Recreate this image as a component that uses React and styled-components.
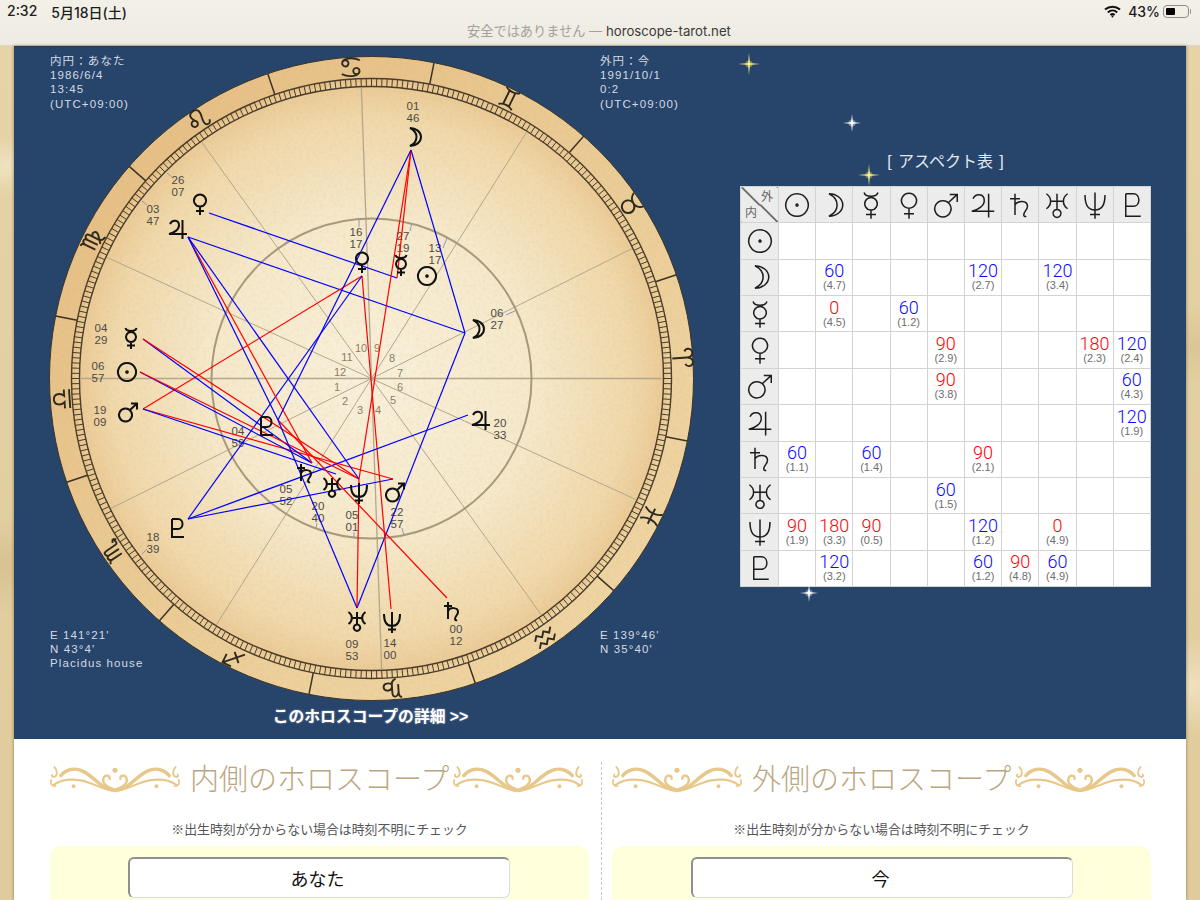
import React from 'react';
import styled, { createGlobalStyle } from 'styled-components';

const SANS = '"Liberation Sans", "Noto Sans CJK JP", sans-serif';
const UI = 'Inter, "Noto Sans CJK JP", sans-serif';

const GlobalStyle = createGlobalStyle`
  html, body {
    margin: 0;
    height: 900px;
    overflow: hidden;
    font-family: ${SANS};
    background: #e4d2a8;
  }
`;

// planet order is the same for the table columns, rows and the chart
const PLANET_PATHS = {
  sun: 'M12 3a9 9 0 1 0 0.01 0 M12 11.2a0.8 0.8 0 1 0 0.01 0',
  moon: 'M8 3C14 3 19 7 19 12C19 17 14 21 8 21C12 19 14.5 16 14.5 12C14.5 8 12 5 8 3Z',
  mercury: 'M6.5 2C7.5 6 16.5 6 17.5 2 M12 6a5 5 0 1 0 0.01 0 M12 16V23 M8 19.5H16',
  venus: 'M12 2.5a6 6 0 1 0 0.01 0 M12 14.5V23 M8 19H16',
  mars: 'M9.5 8.5a6.5 6.5 0 1 0 0.01 0 M14 10L21 3.5 M15 3.5H21V9.5',
  jupiter: 'M4 7C6 2.5 13 2.5 13 8.5C13 12.5 8 16 3 17H21 M16.5 3V22',
  saturn: 'M8 3V20 M4 7H12 M8 12C10 8 18 8 18 13C18 16 15 17 15 20C15 21 16 21.5 17 21',
  uranus: 'M3.5 3C8 6 8 12 3.5 15 M20.5 3C16 6 16 12 20.5 15 M7 9H17 M12 3V15.5 M12 15.5a3.2 3.2 0 1 0 0.01 0',
  neptune: 'M4 4C4 13 7 16 12 16C17 16 20 13 20 4 M12 2V23 M8 19.5H16',
  pluto: 'M7 3V21H19 M7 3H13C19 3 19 13 13 13H7',
};

const PLANETS = ['sun', 'moon', 'mercury', 'venus', 'mars', 'jupiter', 'saturn', 'uranus', 'neptune', 'pluto'];

const SIGN_PATHS = [
  'M12 22V8C12 3 8 2 6 3C3 4 3 9 6 10 M12 8C12 3 16 2 18 3C21 4 21 9 18 10',
  'M12 9a6 6 0 1 0 0.01 0 M4 3C6 8 9 9 12 9C15 9 18 8 20 3',
  'M5 3C9 6 15 6 19 3 M5 21C9 18 15 18 19 21 M9 5.5V18.5 M15 5.5V18.5',
  'M7 5a3 3 0 1 0 0.01 0 M4 8C4 3 14 2 21 6 M17 13a3 3 0 1 0 0.01 0 M20 16C20 21 10 22 3 18',
  'M7 11a3 3 0 1 0 0.01 0 M9 12C6 7 7 3 12 3C18 3 18 8 16 13C15 16 14 20 17 21C19 22 21 20 21 18',
  'M3 5C5 4 6 6 6 8V19 M6 8C7 4 11 4 11 8V19 M11 8C12 4 16 4 16 8V17C16 20 18 22 21 22 M16 11C20 8 23 12 20 15C18 17 15 19 13 21',
  'M3 21H21 M3 16H9C6 13 6 6 12 6C18 6 18 13 15 16H21',
  'M3 5C5 4 6 6 6 8V19 M6 8C7 4 11 4 11 8V19 M11 8C12 4 16 4 16 8V18C16 21 18 21 22 19 M22 19L19 17 M22 19L20 22',
  'M4 20L20 4 M11 4H20V13 M6 10L14 18',
  'M3 5C5 4 6 7 6 10V17 M6 10C7 4 12 4 12 9V17C12 21 9 22 8 22 M12 14C14 10 20 11 20 15C20 19 14 19 12 17',
  'M2 10L6 6L10 10L14 6L18 10L22 6 M2 18L6 14L10 18L14 14L18 18L22 14',
  'M6 3C10 8 10 16 6 21 M18 3C14 8 14 16 18 21 M4 12H20',
];

// chart centre, in page pixels
const CX = 371.5;
const CY = 377.5;

const polar = (r, deg) => {
  const a = (deg * Math.PI) / 180;
  return [CX + r * Math.cos(a), CY - r * Math.sin(a)];
};

const OUTER = {
  sun: { glyph: [127, 371], tip: [140, 371], deg: ['06', '57'], at: [98, 365] },
  moon: { glyph: [414, 136], tip: [411, 149], deg: ['01', '46'], at: [413, 105] },
  mercury: { glyph: [131, 337], tip: [143, 338], deg: ['04', '29'], at: [101, 327] },
  venus: { glyph: [200, 203], tip: [209, 212], deg: ['26', '07'], at: [178, 179] },
  mars: { glyph: [128, 411], tip: [143, 408], deg: ['19', '09'], at: [100, 409] },
  jupiter: { glyph: [178, 228], tip: [188, 236], deg: ['03', '47'], at: [153, 208] },
  saturn: { glyph: [452, 610], tip: [447, 597], deg: ['00', '12'], at: [456, 628] },
  uranus: { glyph: [357, 620], tip: [357, 607], deg: ['09', '53'], at: [352, 643] },
  neptune: { glyph: [392, 621], tip: [391, 608], deg: ['14', '00'], at: [390, 642] },
  pluto: { glyph: [177, 527], tip: [188, 518], deg: ['18', '39'], at: [153, 536] },
};

const INNER = {
  sun: { glyph: [427, 275], tip: [427, 275], deg: ['13', '17'], at: [435, 247] },
  moon: { glyph: [477, 328], tip: [465, 332], deg: ['06', '27'], at: [497, 312] },
  mercury: { glyph: [401, 264], tip: [397, 277], deg: ['27', '19'], at: [403, 235] },
  venus: { glyph: [362, 261], tip: [362, 275], deg: ['16', '17'], at: [356, 231] },
  mars: { glyph: [395, 491], tip: [393, 478], deg: ['22', '57'], at: [397, 511] },
  jupiter: { glyph: [481, 419], tip: [468, 414], deg: ['20', '33'], at: [500, 422] },
  saturn: { glyph: [305, 472], tip: [312, 462], deg: ['05', '52'], at: [286, 488] },
  uranus: { glyph: [332, 486], tip: [336, 473], deg: ['20', '40'], at: [318, 505] },
  neptune: { glyph: [359, 492], tip: [359, 478], deg: ['05', '01'], at: [352, 514] },
  pluto: { glyph: [266, 425], tip: [278, 419], deg: ['04', '59'], at: [238, 430] },
};

// [inner planet, outer planet, aspect, orb]
const ASPECTS = [
  ['moon', 'moon', 60, '4.7'],
  ['moon', 'jupiter', 120, '2.7'],
  ['moon', 'uranus', 120, '3.4'],
  ['mercury', 'moon', 0, '4.5'],
  ['mercury', 'venus', 60, '1.2'],
  ['venus', 'mars', 90, '2.9'],
  ['venus', 'neptune', 180, '2.3'],
  ['venus', 'pluto', 120, '2.4'],
  ['mars', 'mars', 90, '3.8'],
  ['mars', 'pluto', 60, '4.3'],
  ['jupiter', 'pluto', 120, '1.9'],
  ['saturn', 'sun', 60, '1.1'],
  ['saturn', 'mercury', 60, '1.4'],
  ['saturn', 'jupiter', 90, '2.1'],
  ['uranus', 'mars', 60, '1.5'],
  ['neptune', 'sun', 90, '1.9'],
  ['neptune', 'moon', 180, '3.3'],
  ['neptune', 'mercury', 90, '0.5'],
  ['neptune', 'jupiter', 120, '1.2'],
  ['neptune', 'uranus', 0, '4.9'],
  ['pluto', 'moon', 120, '3.2'],
  ['pluto', 'jupiter', 60, '1.2'],
  ['pluto', 'saturn', 90, '4.8'],
  ['pluto', 'uranus', 60, '4.9'],
];

const isHard = (deg) => deg === 0 || deg === 90 || deg === 180;

const HOUSE_ANGLES = [0, 26.5, 57.8, 92, 125.7, 155.4];

const HOUSE_NUMBERS = [
  ['10', 361, 347], ['9', 377, 347], ['8', 392, 357], ['7', 400, 372],
  ['6', 400, 386], ['5', 393, 399], ['4', 378, 409], ['3', 360, 409],
  ['2', 345, 400], ['1', 337, 386], ['12', 340, 371], ['11', 347, 356],
];

const POINTERS = [
  [167, 172, 172, 176], [142, 200, 147, 204], [142, 553, 147, 548],
  [359, 217, 359, 226], [412, 222, 410, 230], [447, 237, 443, 247], [517, 309, 506, 314],
  [317, 522, 316, 527], [354, 531, 354, 537], [402, 527, 404, 535],
];

const TICKS = Array.from({ length: 360 }, (_, i) => {
  const [x1, y1] = polar(292, i);
  const [x2, y2] = polar(300, i);
  return `M${x1.toFixed(1)} ${y1.toFixed(1)}L${x2.toFixed(1)} ${y2.toFixed(1)}`;
}).join('');

const Page = styled.div`
  width: 1200px;
  height: 900px;
  overflow: hidden;
  display: flex;
  flex-direction: column;
`;

const StatusBar = styled.header`
  height: 46px;
  flex: none;
  box-sizing: border-box;
  padding: 3px 9px 0 7px;
  background: linear-gradient(#f3f0e7, #eeebe2);
  border-bottom: 1px solid #d8d5cc;
  font-family: ${UI};
`;

const StatusRow = styled.div`
  display: flex;
  align-items: center;
  justify-content: space-between;
  height: 17px;
  font-size: 14px;
  font-weight: 500;
  color: #1c1c1c;
`;

const Clock = styled.div`
  display: flex;
  gap: 14px;
`;

const Indicators = styled.div`
  display: flex;
  align-items: center;
  gap: 3px;
`;

const WifiIcon = styled.svg`
  width: 17px;
  height: 13px;
  margin-right: 4px;
  fill: none;
  stroke: #111;
  stroke-width: 2;
`;

const Battery = styled.div`
  position: relative;
  width: 26px;
  height: 13px;
  box-sizing: border-box;
  border: 1px solid #8e8c85;
  border-radius: 4px;
  padding: 2px;
  margin-right: 2px;

  &::before {
    content: '';
    display: block;
    width: 9px;
    height: 100%;
    background: #000;
    border-radius: 1px;
  }

  &::after {
    content: '';
    position: absolute;
    right: -3px;
    top: 3px;
    width: 1.5px;
    height: 5px;
    background: #9a9890;
    border-radius: 0 1px 1px 0;
  }
`;

const AddressBar = styled.div`
  margin-top: 2px;
  text-align: center;
  font-size: 13.2px;
  line-height: 18px;
  color: #a3a19b;
`;

const Domain = styled.span`
  color: #3a3a3a;
`;

const Body = styled.main`
  flex: 1;
  display: flex;
  min-height: 0;
  background:
    radial-gradient(circle at 6px 120px, #f0e2c0 0, transparent 30px),
    radial-gradient(circle at 1194px 300px, #d9c596 0, transparent 40px),
    radial-gradient(circle at 5px 520px, #d8c290 0, transparent 50px),
    radial-gradient(circle at 1192px 640px, #efe0bd 0, transparent 50px),
    linear-gradient(#e6d3a6, #dfcb9c);
  padding: 0 14px;
`;

const Sheet = styled.div`
  flex: 1;
  display: flex;
  flex-direction: column;
  min-width: 0;
  background: #fff;
  box-shadow: 0 0 3px rgba(70, 50, 20, 0.55);
`;

const Panel = styled.section`
  position: relative;
  height: 693px;
  flex: none;
  display: flex;
  background: #27446a;
  border-top: 1px solid #1f3858;
  box-sizing: border-box;
`;

const ChartArea = styled.div`
  position: relative;
  width: 716px;
  flex: none;
  display: flex;
  flex-direction: column;
  align-items: center;
`;

const ChartSvg = styled.svg`
  display: block;
  flex: none;
`;

const DegreeText = styled.text`
  font-family: ${SANS};
  font-size: 11.5px;
  fill: #4c4a44;
  text-anchor: middle;
`;

const HouseNumber = styled.text`
  font-family: ${SANS};
  font-size: 11px;
  fill: #8b7f63;
  text-anchor: middle;
  dominant-baseline: central;
`;

const CornerNote = styled.div`
  position: absolute;
  left: ${({ $left }) => $left}px;
  top: ${({ $top }) => $top}px;
  font-size: 11.5px;
  line-height: 14.2px;
  letter-spacing: 1.1px;
  color: #d5dbe4;
  white-space: pre;
`;

const DetailLink = styled.a`
  margin-left: -3px;
  font-size: 15.8px;
  font-weight: 700;
  line-height: 20px;
  color: #fff;
  text-decoration: none;
  text-shadow: 0 0 2px rgba(255, 255, 255, 0.5);
`;

const SidePanel = styled.div`
  flex: none;
  width: 411px;
  margin-left: 10px;
  padding-top: 105px;
`;

const SideTitle = styled.h2`
  margin: 0 0 14px;
  font-size: 16px;
  font-weight: 400;
  word-spacing: 2px;
  line-height: 20px;
  text-align: center;
  color: #e4e8ee;
`;

const Sparkle = styled.svg`
  position: absolute;
  left: ${({ $x }) => $x - 14 - 12}px;
  top: ${({ $y }) => $y - 46 - 12}px;
  width: 24px;
  height: 24px;
  pointer-events: none;
`;

const AspectTable = styled.table`
  width: 411px;
  table-layout: fixed;
  border-collapse: collapse;
  background: #fff;
  border: 1px solid #b4bac2;
`;

const Td = styled.td`
  padding: 0;
  border: 1.5px solid #d3d3d3;
  text-align: center;
  vertical-align: middle;
  height: 35.36px;
  line-height: 1;
  background: ${({ $head }) => ($head ? '#ececec' : '#fff')};
`;

const CornerCell = styled(Td)`
  position: relative;
  width: 37px;
  background: linear-gradient(
    to bottom left,
    #ececec calc(50% - 0.7px),
    #444 calc(50% - 0.7px),
    #444 calc(50% + 0.7px),
    #ececec calc(50% + 0.7px)
  );
`;

const CornerLabel = styled.span`
  position: absolute;
  font-size: 12px;
  line-height: 12px;
  color: #666;
  ${({ $outer }) => ($outer ? 'top: 4px; right: 5px;' : 'bottom: 3px; left: 4px;')}
`;

const AspectValue = styled.div`
  font-family: Roboto, ${SANS};
  font-size: 18px;
  font-weight: 300;
  line-height: 16px;
  color: ${({ $hard }) => ($hard ? '#ff0000' : '#0a0aff')};
`;

const Orb = styled.div`
  font-size: 11px;
  line-height: 12px;
  color: #6d6d6d;
`;

const TableIcon = styled.svg`
  display: block;
  margin: 0 auto;
  width: 30px;
  height: 30px;
  fill: none;
  stroke: #1d1d1d;
  stroke-width: 1.2;
`;

const FormSection = styled.section`
  flex: 1;
  display: flex;
  padding-top: 23px;
  min-height: 0;
  overflow: hidden;
`;

const Column = styled.div`
  box-sizing: border-box;
  width: ${({ $right }) => ($right ? 585 : 587)}px;
  padding: ${({ $right }) => ($right ? '0 35px 0 10px' : '0 12px 0 36px')};
  border-left: ${({ $right }) => ($right ? '1px dashed #c8c8c8' : 'none')};
`;

const Heading = styled.h3`
  margin: 0;
  height: 34px;
  display: flex;
  align-items: center;
  font-size: 29px;
  line-height: 30px;
  font-weight: 300;
  font-family: "Noto Sans CJK JP", sans-serif;
  color: #bba77f;
  white-space: nowrap;
`;

const HeadingText = styled.span`
  position: relative;
  top: -2px;
  margin: 0 4px 0 10px;
`;

const Flourish = styled.svg`
  width: 130px;
  height: 29px;
  flex: none;
  fill: none;
  stroke: #e8c88a;
  stroke-linecap: round;
`;

const Note = styled.p`
  margin: 25px 0 7px;
  font-size: 12.9px;
  line-height: 18px;
  text-align: center;
  color: #555;
`;

const InputBox = styled.div`
  height: 200px;
  padding-top: 11px;
  box-sizing: border-box;
  background: #ffffdc;
  border-radius: 12px;
`;

const NameInput = styled.input`
  display: block;
  box-sizing: border-box;
  width: 382px;
  height: 41px;
  margin: 0 0 0 ${({ $offset }) => $offset}px;
  padding: 0 4px 1px 0;
  border: 1px solid #dddddd;
  border-top: 2px solid #8f8f8f;
  border-left: 2px solid #8f8f8f;
  border-radius: 6px;
  background: #fff;
  font-family: ${SANS};
  font-size: 18px;
  color: #111;
  text-align: center;
  outline: none;
`;

const FlourishArt = () => {
  const half = (
    <>
      <path strokeWidth="3.2" d="M63 25C51 25 45 13 33 7C25 3 17 5 12 11" />
      <path strokeWidth="2" d="M63 25C52 26 42 16 27 15C17 14 10 16 5 20" />
      <path strokeWidth="1.8" d="M6 3C9 6 9 11 6 12C4 13 3 11 4 10" />
      <path strokeWidth="1.6" d="M3 15C2 18 3 21 7 21" />
      <path strokeWidth="2.2" d="M62 24C55 22 51 18 52 14C53 10 58 10 58 14" />
      <circle cx="24" cy="21" r="1.8" fill="#e8c88a" strokeWidth="0" />
    </>
  );
  return (
    <Flourish viewBox="2 1 122 27.3">
      {half}
      <g transform="translate(126 0) scale(-1 1)">{half}</g>
      <circle cx="63" cy="6" r="2.4" fill="#e8c88a" strokeWidth="0" />
    </Flourish>
  );
};

const Star = ({ x, y, color, size = 11 }) => (
  <Sparkle $x={x} $y={y} viewBox="-12 -12 24 24">
    <circle r="3.6" fill={color} opacity="0.35" />
    <path
      fill={color}
      d={`M0 ${-size}L1 -1L${size} 0L1 1L0 ${size}L-1 1L${-size} 0L-1 -1Z`}
      opacity="0.85"
    />
    <circle r="1.7" fill={color} />
  </Sparkle>
);

const ChartGlyph = ({ name, at, size = 24 }) => (
  <path
    d={PLANET_PATHS[name]}
    fill="none"
    stroke="#111"
    strokeWidth="2"
    transform={`translate(${at[0] - size / 2} ${at[1] - size / 2}) scale(${size / 24})`}
  />
);

const DegreeLabel = ({ deg, at }) => (
  <DegreeText>
    <tspan x={at[0]} y={at[1] + 4}>{deg[0]}</tspan>
    <tspan x={at[0]} y={at[1] + 16}>{deg[1]}</tspan>
  </DegreeText>
);

const Chart = () => (
  <ChartSvg width="716" height="660" viewBox="14 46 716 660">
    <defs>
      <radialGradient id="paper">
        <stop offset="0" stopColor="#f9f1dc" />
        <stop offset="0.55" stopColor="#f6e9cb" />
        <stop offset="0.88" stopColor="#f0d8aa" />
        <stop offset="1" stopColor="#eac994" />
      </radialGradient>
      <linearGradient id="band" x1="0" y1="0" x2="1" y2="1">
        <stop offset="0" stopColor="#e4bb80" />
        <stop offset="0.6" stopColor="#ecce99" />
        <stop offset="1" stopColor="#f0d8a8" />
      </linearGradient>
      <filter id="grain" x="0" y="0" width="100%" height="100%">
        <feTurbulence type="fractalNoise" baseFrequency="0.3" numOctaves="3" seed="4" />
        <feColorMatrix values="0 0 0 0 0.55  0 0 0 0 0.38  0 0 0 0 0.16  0 0 0 1.2 -0.5" />
        <feComposite in2="SourceGraphic" operator="in" />
      </filter>
    </defs>

    <circle cx={CX} cy={CY} r="322" fill="url(#band)" stroke="#3d3324" strokeWidth="1" />
    <circle cx={CX} cy={CY} r="296" fill="url(#paper)" />
    <circle cx={CX} cy={CY} r="321" fill="#000" filter="url(#grain)" opacity="0.22" />

    {Array.from({ length: 12 }, (_, i) => {
      const [x1, y1] = polar(300, 18.8 + i * 30);
      const [x2, y2] = polar(322, 18.8 + i * 30);
      return <line key={i} x1={x1} y1={y1} x2={x2} y2={y2} stroke="#3d3324" strokeWidth="1.5" />;
    })}

    <path d={TICKS} stroke="#4a3e2b" strokeWidth="1" />
    <circle cx={CX} cy={CY} r="292" fill="none" stroke="#4a3e2b" strokeWidth="1.4" />
    <circle cx={CX} cy={CY} r="300" fill="none" stroke="#4a3e2b" strokeWidth="1.4" />

    {SIGN_PATHS.map((d, i) => {
      const angle = 3.8 + i * 30;
      const [x, y] = polar(312, angle);
      return (
        <path
          key={i}
          d={d}
          fill="none"
          stroke="#2f2a1f"
          strokeWidth="1.8"
          transform={`translate(${x} ${y}) rotate(${90 - angle}) scale(1.05) translate(-12 -12)`}
        />
      );
    })}

    {HOUSE_ANGLES.map((angle, i) => {
      const [x1, y1] = polar(291, angle);
      const [x2, y2] = polar(291, angle + 180);
      return <line key={i} x1={x1} y1={y1} x2={x2} y2={y2} stroke="#b3a78c" strokeWidth={i === 0 ? 1.5 : i === 3 ? 1.3 : 1} />;
    })}
    <circle cx={CX} cy={CY} r="160" fill="none" stroke="#a8997a" strokeWidth="2" />

    {POINTERS.map(([x1, y1, x2, y2], i) => (
      <line key={i} x1={x1} y1={y1} x2={x2} y2={y2} stroke="#8f9bb0" strokeWidth="1" />
    ))}
    {HOUSE_NUMBERS.map(([n, x, y]) => (
      <HouseNumber key={n} x={x} y={y}>{n}</HouseNumber>
    ))}

    {PLANETS.map((name) => (
      <React.Fragment key={name}>
        <DegreeLabel deg={OUTER[name].deg} at={OUTER[name].at} />
        <DegreeLabel deg={INNER[name].deg} at={INNER[name].at} />
      </React.Fragment>
    ))}

    {ASPECTS.map(([inner, outer, deg]) => {
      const a = INNER[inner].tip;
      const b = OUTER[outer].tip;
      return (
        <line
          key={`${inner}-${outer}`}
          x1={a[0]}
          y1={a[1]}
          x2={b[0]}
          y2={b[1]}
          stroke={isHard(deg) ? '#ff0000' : '#0000ff'}
          strokeWidth="1.2"
        />
      );
    })}

    {PLANETS.map((name) => (
      <React.Fragment key={name}>
        <ChartGlyph name={name} at={OUTER[name].glyph} />
        <ChartGlyph name={name} at={INNER[name].glyph} />
      </React.Fragment>
    ))}
  </ChartSvg>
);

const PlanetIcon = ({ name }) => (
  <TableIcon viewBox="0 0 24 24">
    <path d={PLANET_PATHS[name]} />
  </TableIcon>
);

const AspectCell = ({ inner, outer }) => {
  const hit = ASPECTS.find((a) => a[0] === inner && a[1] === outer);
  if (!hit) return <Td />;
  return (
    <Td>
      <AspectValue $hard={isHard(hit[2])}>{hit[2]}</AspectValue>
      <Orb>({hit[3]})</Orb>
    </Td>
  );
};

const FormColumn = ({ right, title, value, offset }) => (
  <Column $right={right}>
    <Heading>
      <FlourishArt />
      <HeadingText>{title}</HeadingText>
      <FlourishArt />
    </Heading>
    <Note>※出生時刻が分からない場合は時刻不明にチェック</Note>
    <InputBox>
      <NameInput $offset={offset} defaultValue={value} />
    </InputBox>
  </Column>
);

const App = () => (
  <Page>
    <GlobalStyle />
    <StatusBar>
      <StatusRow>
        <Clock>
          <span>2:32</span>
          <span>5月18日(土)</span>
        </Clock>
        <Indicators>
          <WifiIcon viewBox="0 0 17 13">
            <path d="M1 4.6C5.3 0.8 11.7 0.8 16 4.6" />
            <path d="M3.8 7.4C6.5 5 10.5 5 13.2 7.4" />
            <path d="M6.4 10C7.6 9 9.4 9 10.6 10" />
            <circle cx="8.5" cy="11.6" r="1" fill="#111" stroke="none" />
          </WifiIcon>
          <span>43%</span>
          <Battery />
        </Indicators>
      </StatusRow>
      <AddressBar>
        安全ではありません — <Domain>horoscope-tarot.net</Domain>
      </AddressBar>
    </StatusBar>

    <Body>
      <Sheet>
        <Panel>
          <ChartArea>
            <Chart />
            <DetailLink href="#">このホロスコープの詳細 &gt;&gt;</DetailLink>
            <CornerNote $left={36} $top={7}>{'内円：あなた\n1986/6/4\n13:45\n(UTC+09:00)'}</CornerNote>
            <CornerNote $left={586} $top={7}>{'外円：今\n1991/10/1\n0:2\n(UTC+09:00)'}</CornerNote>
            <CornerNote $left={36} $top={581}>{"E 141°21'\nN 43°4'\nPlacidus house"}</CornerNote>
            <CornerNote $left={586} $top={581}>{"E 139°46'\nN 35°40'"}</CornerNote>
          </ChartArea>

          <SidePanel>
            <SideTitle>[ アスペクト表 ]</SideTitle>
            <AspectTable>
              <tbody>
                <tr>
                  <CornerCell $head>
                    <CornerLabel $outer>外</CornerLabel>
                    <CornerLabel>内</CornerLabel>
                  </CornerCell>
                  {PLANETS.map((p) => (
                    <Td key={p} $head><PlanetIcon name={p} /></Td>
                  ))}
                </tr>
                {PLANETS.map((inner) => (
                  <tr key={inner}>
                    <Td $head><PlanetIcon name={inner} /></Td>
                    {PLANETS.map((outer) => (
                      <AspectCell key={outer} inner={inner} outer={outer} />
                    ))}
                  </tr>
                ))}
              </tbody>
            </AspectTable>
          </SidePanel>

          <Star x={749} y={63} color="#fff27a" />
          <Star x={852} y={122} color="#ffffff" size={9} />
          <Star x={869} y={174} color="#fff27a" />
          <Star x={809} y={592} color="#ffffff" size={9} />
        </Panel>

        <FormSection>
          <FormColumn title="内側のホロスコープ" value="あなた" offset={78} />
          <FormColumn right title="外側のホロスコープ" value="今" offset={79} />
        </FormSection>
      </Sheet>
    </Body>
  </Page>
);

export default App;
